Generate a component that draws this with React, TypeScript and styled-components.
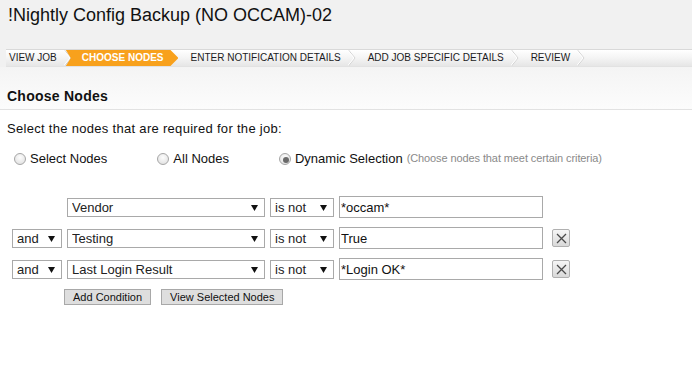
import styled, { createGlobalStyle, css } from 'styled-components';

const GlobalStyle = createGlobalStyle`
  body {
    margin: 0;
    background: #fff;
    font-family: 'Liberation Sans', Arial, sans-serif;
    color: #111;
  }
`;

const Header = styled.header`
  background: #f1f1f1;
  padding-top: 5px;
`;

const Title = styled.h1`
  margin: 0 0 23px 8px;
  font-size: 18px;
  line-height: 21px;
  font-weight: normal;
  color: #111;
`;

const StepBar = styled.nav`
  display: flex;
  margin-left: 6px;
  height: 16px;
  border-top: 1px solid #d9d9d9;
  border-bottom: 1px solid #e2e2e2;
  background: linear-gradient(#ffffff, #f4f4f4 50%, #e6e6e6);
`;

const Step = styled.div<{ $active?: boolean; $first?: boolean }>`
  display: flex;
  align-items: center;
  height: 16px;
  padding-left: ${(p) => (p.$first ? 3 : 12)}px;
  font-size: 10px;
  line-height: 16px;
  color: #1b1b22;
  white-space: nowrap;
  ${(p) =>
    p.$active &&
    css`
      margin-left: -6px;
      padding-left: 16px;
      background: #f8a11c;
      color: #fff;
      font-weight: bold;
      clip-path: polygon(0 0, calc(100% - 8px) 0, 100% 50%, calc(100% - 8px) 100%, 0 100%, 5px 50%);
    `}
`;

const StepLabel = styled.span`
  padding-right: 7px;
`;

const Chevron = ({ active }: { active?: boolean }) => (
  <svg width="8" height="16" viewBox="0 0 8 16" style={{ display: 'block', flex: 'none' }}>
    {active ? null : (
      <>
        <polyline points="0.5,0 7,8 0.5,16" fill="none" stroke="#d2d2d2" strokeWidth="1" />
        <polyline points="-0.5,0 6,8 -0.5,16" fill="none" stroke="#ffffff" strokeWidth="1" />
      </>
    )}
  </svg>
);

const SectionHead = styled.div`
  padding: 21px 0 5px 7px;
  border-bottom: 1px solid #e2e2e2;
  background: linear-gradient(#f4f4f4, #fcfcfc);
`;

const H2 = styled.h2`
  margin: 0;
  font-size: 14px;
  line-height: 16px;
  font-weight: bold;
  letter-spacing: 0.25px;
  color: #111;
`;

const Body = styled.main`
  padding: 11px 0 0 0;
`;

const Intro = styled.p`
  margin: 0 0 15px 7px;
  font-size: 13px;
  line-height: 15px;
  letter-spacing: 0.3px;
`;

const RadioRow = styled.div`
  display: flex;
  align-items: center;
  padding-left: 14px;
  font-size: 13px;
  line-height: 15px;
`;

const RadioLabel = styled.label<{ $gap: number }>`
  display: flex;
  align-items: center;
  margin-right: ${(p) => p.$gap}px;
`;

const Radio = styled.input.attrs({ type: 'radio', name: 'nodes' })`
  appearance: none;
  margin: 0 4px 0 0;
  width: 12px;
  height: 12px;
  border: 1px solid #a6a6a6;
  border-radius: 50%;
  background: radial-gradient(circle at 50% 35%, #fdfdfd, #dcdcdc);
  position: relative;
  &:checked::after {
    content: '';
    position: absolute;
    left: 3px;
    top: 3px;
    width: 6px;
    height: 6px;
    border-radius: 50%;
    background: #6a6a6a;
  }
`;

const Hint = styled.span`
  margin-left: 4px;
  font-size: 11px;
  letter-spacing: -0.1px;
  color: #8a8a8a;
`;

const Conditions = styled.div`
  display: flex;
  flex-direction: column;
  gap: 9px;
  margin-top: 30px;
  padding-left: 12px;
`;

const Row = styled.div`
  display: flex;
  align-items: center;
  gap: 5px;
  height: 22px;
`;

const SelectWrap = styled.div<{ $w: number }>`
  position: relative;
  width: ${(p) => p.$w}px;
  flex: none;
`;

const Spacer = styled.div`
  width: 50px;
  flex: none;
`;

const Select = styled.select`
  appearance: none;
  display: block;
  box-sizing: border-box;
  width: 100%;
  height: 19px;
  margin: 0;
  padding: 0 16px 0 4px;
  border: 1px solid #a9a9a9;
  border-radius: 0;
  background: #fff;
  font-family: 'Liberation Sans', Arial, sans-serif;
  font-size: 13px;
  color: #222;
`;

const Arrow = styled.svg`
  position: absolute;
  right: 7px;
  top: 7px;
  pointer-events: none;
`;

const TextInput = styled.input`
  box-sizing: border-box;
  width: 204px;
  height: 22px;
  margin: 0;
  padding: 0 1px;
  border: 1px solid #a9a9a9;
  font-family: 'Liberation Sans', Arial, sans-serif;
  font-size: 13px;
  color: #111;
`;

const RemoveButton = styled.button`
  box-sizing: border-box;
  width: 18px;
  height: 18px;
  margin: 0 0 0 4px;
  padding: 0;
  display: flex;
  align-items: center;
  justify-content: center;
  border: 1px solid #b0b0b0;
  border-radius: 2px;
  background: linear-gradient(#f6f6f6, #d9d9d9);
`;

const Actions = styled.div`
  display: flex;
  gap: 10px;
  margin: 9px 0 0 64px;
`;

const ActionButton = styled.button`
  box-sizing: border-box;
  height: 16px;
  margin: 0;
  padding: 0 8px;
  border: 1px solid #a8a8a8;
  background: #dedede;
  font-family: 'Liberation Sans', Arial, sans-serif;
  font-size: 11px;
  line-height: 14px;
  color: #111;
`;

function Dropdown({ width, value, options }: { width: number; value: string; options: string[] }) {
  return (
    <SelectWrap $w={width}>
      <Select defaultValue={value}>
        {options.map((o) => (
          <option key={o}>{o}</option>
        ))}
      </Select>
      <Arrow width="7" height="6" viewBox="0 0 7 6">
        <polygon points="0,0 7,0 3.5,6" fill="#111" />
      </Arrow>
    </SelectWrap>
  );
}

const steps = ['VIEW JOB', 'CHOOSE NODES', 'ENTER NOTIFICATION DETAILS', 'ADD JOB SPECIFIC DETAILS', 'REVIEW'];
const fields = ['Vendor', 'Testing', 'Last Login Result'];

const conditions = [
  { join: '', field: 'Vendor', value: '*occam*' },
  { join: 'and', field: 'Testing', value: 'True' },
  { join: 'and', field: 'Last Login Result', value: '*Login OK*' },
];

export default function App() {
  return (
    <>
      <GlobalStyle />
      <Header>
        <Title>!Nightly Config Backup (NO OCCAM)-02</Title>
        <StepBar>
          {steps.map((s, i) => {
            const active = i === 1;
            return (
              <Step key={s} $active={active} $first={i === 0}>
                <StepLabel>{s}</StepLabel>
                <Chevron active={active} />
              </Step>
            );
          })}
        </StepBar>
      </Header>
      <SectionHead>
        <H2>Choose Nodes</H2>
      </SectionHead>
      <Body>
        <Intro>Select the nodes that are required for the job:</Intro>
        <RadioRow>
          <RadioLabel $gap={50}>
            <Radio />
            Select Nodes
          </RadioLabel>
          <RadioLabel $gap={50}>
            <Radio />
            All Nodes
          </RadioLabel>
          <RadioLabel $gap={0}>
            <Radio defaultChecked />
            Dynamic Selection
            <Hint>(Choose nodes that meet certain criteria)</Hint>
          </RadioLabel>
        </RadioRow>
        <Conditions>
          {conditions.map((c) => (
            <Row key={c.field}>
              {c.join ? <Dropdown width={50} value="and" options={['and', 'or']} /> : <Spacer />}
              <Dropdown width={198} value={c.field} options={fields} />
              <Dropdown width={64} value="is not" options={['is', 'is not']} />
              <TextInput defaultValue={c.value} />
              {c.join && (
                <RemoveButton aria-label="Remove condition">
                  <svg width="11" height="11" viewBox="0 0 11 11">
                    <path d="M1 1 L10 10 M10 1 L1 10" stroke="#4a4a4a" strokeWidth="1.3" fill="none" />
                  </svg>
                </RemoveButton>
              )}
            </Row>
          ))}
        </Conditions>
        <Actions>
          <ActionButton>Add Condition</ActionButton>
          <ActionButton>View Selected Nodes</ActionButton>
        </Actions>
      </Body>
    </>
  );
}
